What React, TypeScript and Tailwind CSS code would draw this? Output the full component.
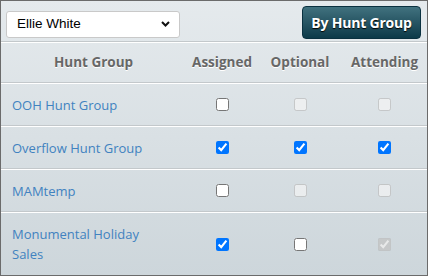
import { useState } from 'react';

interface HuntRow {
  name: string;
  assigned: boolean;
  optional: boolean;
  attending: boolean;
  optionalDisabled: boolean;
  attendingDisabled: boolean;
  tall?: boolean;
}

const rows: HuntRow[] = [
  { name: 'OOH Hunt Group', assigned: false, optional: false, attending: false, optionalDisabled: true, attendingDisabled: true },
  { name: 'Overflow Hunt Group', assigned: true, optional: true, attending: true, optionalDisabled: false, attendingDisabled: false },
  { name: 'MAMtemp', assigned: false, optional: false, attending: false, optionalDisabled: true, attendingDisabled: true },
  { name: 'Monumental Holiday Sales', assigned: true, optional: false, attending: true, optionalDisabled: false, attendingDisabled: true, tall: true },
];

function Check({ checked, disabled }: { checked: boolean; disabled?: boolean }) {
  const [on, setOn] = useState(checked);
  return (
    <div className="flex items-center justify-center">
      <input
        type="checkbox"
        className="m-0 h-[13px] w-[13px]"
        checked={on}
        disabled={disabled}
        onChange={(e) => setOn(e.target.checked)}
      />
    </div>
  );
}

export default function App() {
  return (
    <div className="w-[428px] h-[276px] overflow-hidden border border-[#6b6b6b] bg-gradient-to-b from-[#e5eaed] to-[#cdd6db] font-['Open_Sans',sans-serif]">
      {/* toolbar */}
      <div className="flex h-[41px] items-start justify-between border-b border-[#c3c8cb] pl-[5px] pr-[6px]">
        <div className="relative mt-[9px]">
          <select
            defaultValue="Ellie White"
            className="h-[27px] w-[174px] appearance-none rounded-[3px] border border-[#c9c9c9] bg-white pl-[10px] font-['Liberation_Sans',Arial,sans-serif] text-[13.5px] text-black outline-none"
          >
            <option>Ellie White</option>
          </select>
          <svg className="pointer-events-none absolute right-[10px] top-[11px]" width="9" height="6" viewBox="0 0 9 6">
            <path d="M1 1l3.5 3.5L8 1" fill="none" stroke="#111" strokeWidth="2" />
          </svg>
        </div>
        <button className="mt-[5px] h-[33px] w-[119px] rounded-[4px] border border-[#0a3140] bg-gradient-to-b from-[#41727f] to-[#0c3a49] text-[14px] font-bold tracking-[-0.2px] text-white [text-shadow:0_1px_1px_#000]">
          By Hunt Group
        </button>
      </div>

      {/* header */}
      <div className="grid h-[41px] grid-cols-[185px_72px_84px_1fr] items-center border-t border-b border-t-white border-b-[#c3c8cb] text-[13.5px] font-bold text-[#676767] [text-shadow:0_1px_0_#fff]">
        <div className="text-center">Hunt Group</div>
        <div className="text-center">Assigned</div>
        <div className="text-center">Optional</div>
        <div className="text-center">Attending</div>
      </div>

      {rows.map((r) => (
        <div
          key={r.name}
          className={`grid grid-cols-[185px_72px_84px_1fr] items-center border-t border-t-white ${
            r.tall ? 'h-[63px]' : 'h-[43px] border-b border-b-[#c3c8cb]'
          }`}
        >
          <div className="pl-[11px] pr-[40px] text-[13px] leading-[20px] text-[#4182c0]">{r.name}</div>
          <Check checked={r.assigned} />
          <Check checked={r.optional} disabled={r.optionalDisabled} />
          <Check checked={r.attending} disabled={r.attendingDisabled} />
        </div>
      ))}
    </div>
  );
}
